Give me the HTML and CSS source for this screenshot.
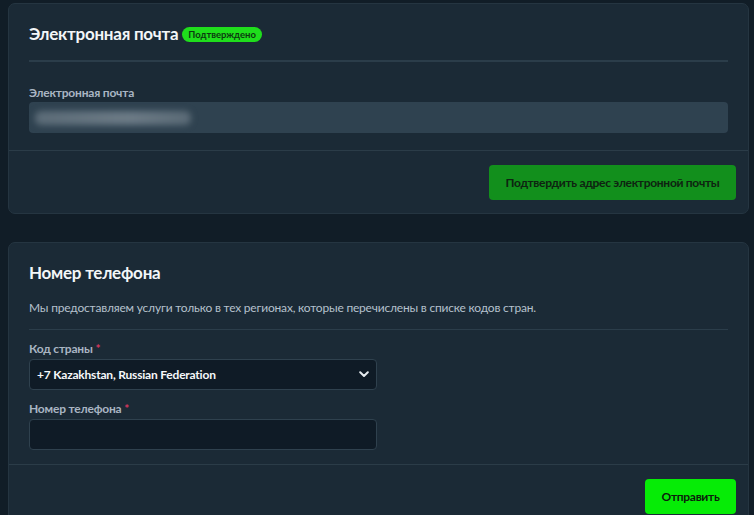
FILE: index.html
```html
<!DOCTYPE html>
<html lang="ru">
<head>
<meta charset="utf-8">
<title>Профиль</title>
<link rel="stylesheet" href="styles.css">
</head>
<body>
<div class="page">
  <section class="card">
    <div class="card-body">
      <div class="title-row">
        <h2 class="card-title">Электронная почта</h2>
        <span class="badge">Подтверждено</span>
      </div>
      <div class="divider"></div>
      <label class="label label-first">Электронная почта</label>
      <div class="input input-disabled"><span class="blur-text"></span></div>
    </div>
    <div class="card-footer">
      <button class="btn btn-dark">Подтвердить адрес электронной почты</button>
    </div>
  </section>

  <section class="card card-second">
    <div class="card-body body-second">
      <h2 class="card-title">Номер телефона</h2>
      <p class="desc">Мы предоставляем услуги только в тех регионах, которые перечислены в списке кодов стран.</p>
      <div class="divider divider-tight"></div>
      <label class="label">Код страны <span class="req">*</span></label>
      <div class="input select">
        <span class="select-value">+7 Kazakhstan, Russian Federation</span>
        <svg class="chevron" width="10" height="7" viewBox="0 0 10 7"><path d="M1.2 1.3 L5 5 L8.8 1.3" fill="none" stroke="#e6ebef" stroke-width="2" stroke-linecap="round" stroke-linejoin="round"/></svg>
      </div>
      <label class="label label-gap">Номер телефона <span class="req">*</span></label>
      <div class="input select"></div>
    </div>
    <div class="card-footer">
      <button class="btn btn-bright">Отправить</button>
    </div>
  </section>
</div>
</body>
</html>
```

FILE: styles.css
```css
* { box-sizing: border-box; }
html, body {
  margin: 0;
  padding: 0;
  background: #111d27;
  height: 100%;
  overflow: hidden;
}
body {
  font-family: "Lato", "Noto Sans", sans-serif;
  color: #eef2f5;
}
.page {
  padding: 3px 5px 0 8px;
  display: flex;
  flex-direction: column;
  gap: 28px;
}
.card {
  background: #1b2a36;
  border: 1px solid #253541;
  border-radius: 7px;
}
.card-body {
  padding: 20px 20px 17px;
  display: flex;
  flex-direction: column;
}
.body-second { padding-bottom: 14px; }
.title-row {
  display: flex;
  align-items: center;
  gap: 4px;
  height: 20px;
}
.card-title {
  margin: 0;
  font-size: 17px;
  font-weight: 700;
  line-height: 20px;
  letter-spacing: -0.25px;
  color: #f3f6f8;
}
.badge {
  background: #1fde1c;
  color: #0c3a10;
  font-size: 9.5px;
  font-weight: 700;
  line-height: 15px;
  padding: 0 6px;
  border-radius: 8px;
  margin-top: 1px;
}
.divider {
  height: 2px;
  background: #2b3d4a;
  margin-top: 16px;
}
.divider-tight {
  height: 1px;
  margin-top: 13px;
}
.label {
  display: block;
  font-size: 12px;
  font-weight: 700;
  line-height: 14px;
  letter-spacing: -0.2px;
  color: #a9b5c3;
  margin-top: 12px;
  margin-bottom: 3px;
}
.label-first { margin-top: 24px; margin-bottom: 2px; }
.req { color: #d7375e; }
.input {
  height: 31px;
  border-radius: 4px;
  display: flex;
  align-items: center;
}
.input-disabled {
  background: #2f4250;
  padding-left: 6px;
}
.blur-text {
  display: block;
  width: 156px;
  height: 14px;
  border-radius: 6px;
  background: linear-gradient(90deg, #5b6b77, #6c7b86 60%, #5a6a76);
  filter: blur(3px);
}
.select {
  background: #0f1b26;
  border: 1px solid #2f414e;
  width: 348px;
  padding: 0 7px 0 7px;
  justify-content: space-between;
}
.select-value {
  font-size: 12px;
  font-weight: 700;
  letter-spacing: -0.2px;
  color: #f6f8fa;
}
.desc {
  margin: 17px 0 0;
  font-size: 12px;
  line-height: 16px;
  letter-spacing: -0.2px;
  color: #b5c1cd;
}
.card-footer {
  border-top: 1px solid #2b3c48;
  padding: 14px 12px 13px;
  display: flex;
  justify-content: flex-end;
}
.btn {
  border: 0;
  border-radius: 4px;
  font-family: inherit;
  font-size: 12px;
  font-weight: 700;
  letter-spacing: -0.3px;
  height: 35px;
  white-space: nowrap;
  cursor: pointer;
}
.btn-dark {
  background: #128f1c;
  color: #0e2311;
  width: 247px;
}
.btn-bright {
  background: #06ec06;
  color: #0c1e0c;
  width: 91px;
}
```
